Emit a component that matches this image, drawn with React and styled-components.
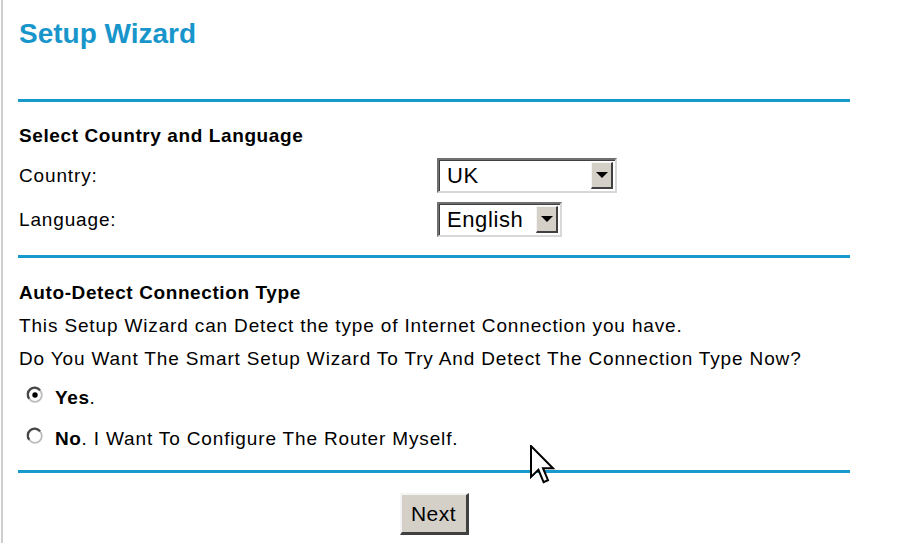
import React from 'react';
import styled, { createGlobalStyle } from 'styled-components';

const GlobalStyle = createGlobalStyle`
  html, body {
    margin: 0;
    padding: 0;
    background: #ffffff;
  }
  body {
    font-family: "Liberation Sans", Arial, sans-serif;
    color: #000;
  }
`;

const Frame = styled.div`
  position: relative;
  width: 895px;
  min-height: 543px;
  margin-left: 1px;
  border-left: 2px solid #cfcfcf;
  padding-left: 15px;
  box-sizing: border-box;
`;

const Page = styled.div`
  width: 832px;
  display: flex;
  flex-direction: column;
`;

const Title = styled.h1`
  margin: 18px 0 0 1px;
  font-size: 28px;
  line-height: 32px;
  font-weight: bold;
  color: #1896cb;
`;

const Rule = styled.div`
  height: 3px;
  background: #1899cc;
  margin-top: ${({ $top }) => $top}px;
`;

const Heading = styled.h2`
  margin: ${({ $top }) => $top}px 0 0 1px;
  font-size: 19px;
  line-height: 24px;
  font-weight: bold;
  letter-spacing: 0.6px;
`;

const FormGrid = styled.div`
  display: grid;
  grid-template-columns: 419px auto;
  row-gap: 9px;
  margin-top: 10px;
  align-items: center;
`;

const Label = styled.div`
  font-size: 19px;
  letter-spacing: 0.85px;
  padding-left: 1px;
`;

const SelectBox = styled.div`
  width: ${({ $w }) => $w}px;
  height: 35px;
  box-sizing: border-box;
  display: flex;
  align-items: center;
  background: #fff;
  border-top: 2px solid #707070;
  border-left: 2px solid #707070;
  border-right: 2px solid #d8d8d8;
  border-bottom: 2px solid #d8d8d8;
  box-shadow: inset 1px 1px 0 #404040;
`;

const SelectText = styled.span`
  flex: 1;
  padding-left: 8px;
  font-size: 22px;
  letter-spacing: 0.6px;
  line-height: 31px;
`;

const DropButton = styled.span`
  width: 22px;
  height: 27px;
  margin-right: 2px;
  box-sizing: border-box;
  background: #d4d0c8;
  border-top: 1px solid #f4f4f4;
  border-left: 1px solid #f4f4f4;
  border-right: 2px solid #404040;
  border-bottom: 2px solid #404040;
  display: flex;
  align-items: center;
  justify-content: center;
  &::after {
    content: '';
    border-left: 6px solid transparent;
    border-right: 6px solid transparent;
    border-top: 6px solid #000;
  }
`;

const Text = styled.p`
  margin: ${({ $top }) => $top || 0}px 0 0 1px;
  font-size: 19px;
  line-height: 32px;
  letter-spacing: 0.85px;
`;

const RadioRow = styled.label`
  display: flex;
  align-items: center;
  height: 41px;
  margin-top: ${({ $top }) => $top || 0}px;
  padding-left: 8px;
  font-size: 19px;
  letter-spacing: 0.85px;
  b {
    font-weight: bold;
    letter-spacing: 0.6px;
  }
`;

const RadioIcon = styled.svg`
  width: 18px;
  height: 18px;
  margin-right: 11px;
  margin-top: -5px;
`;

const ButtonRow = styled.div`
  display: flex;
  justify-content: center;
  margin-top: 20px;
`;

const Button = styled.button`
  width: 69px;
  height: 42px;
  background: #d4d0c8;
  border-top: 2px solid #f4f4f4;
  border-left: 2px solid #f4f4f4;
  border-right: 3px solid #404040;
  border-bottom: 3px solid #404040;
  font-family: "Liberation Sans", Arial, sans-serif;
  font-size: 21px;
  letter-spacing: 0.5px;
  color: #000;
  padding: 0;
`;

const Cursor = styled.svg`
  position: absolute;
  left: 527px;
  top: 445px;
  width: 26px;
  height: 40px;
`;

const Radio = ({ checked }) => (
  <RadioIcon viewBox="0 0 18 18">
    <circle cx="9" cy="9" r="6.8" fill="#fff" stroke="#bcbcbc" strokeWidth="1.8" />
    <path d="M3.2 12.8 A6.8 6.8 0 0 1 14 4.2" fill="none" stroke="#454545" strokeWidth="2.2" />
    {checked && <circle cx="9" cy="9" r="2.7" fill="#000" />}
  </RadioIcon>
);

const Select = ({ width, value }) => (
  <SelectBox $w={width}>
    <SelectText>{value}</SelectText>
    <DropButton />
  </SelectBox>
);

export default function App() {
  return (
    <Frame>
      <GlobalStyle />
      <Page>
        <Title>Setup Wizard</Title>
        <Rule $top={49} />
        <Heading $top={22}>Select Country and Language</Heading>
        <FormGrid>
          <Label>Country:</Label>
          <Select width={180} value="UK" />
          <Label>Language:</Label>
          <Select width={125} value="English" />
        </FormGrid>
        <Rule $top={18} />
        <Heading $top={23}>Auto-Detect Connection Type</Heading>
        <Text $top={5}>This Setup Wizard can Detect the type of Internet Connection you have.</Text>
        <Text $top={1}>Do You Want The Smart Setup Wizard To Try And Detect The Connection Type Now?</Text>
        <RadioRow $top={2}>
          <Radio checked />
          <span><b>Yes</b>.</span>
        </RadioRow>
        <RadioRow>
          <Radio />
          <span><b>No</b>. I Want To Configure The Router Myself.</span>
        </RadioRow>
        <Rule $top={11} />
        <ButtonRow>
          <Button>Next</Button>
        </ButtonRow>
      </Page>
      <Cursor viewBox="0 0 13 20">
        <path d="M0.5 0.5 L0.5 16 L4.2 12.4 L6.8 18.6 L9 17.6 L6.5 11.6 L11.5 11.6 Z" fill="#fff" stroke="#000" strokeWidth="1" strokeLinejoin="miter" />
      </Cursor>
    </Frame>
  );
}
